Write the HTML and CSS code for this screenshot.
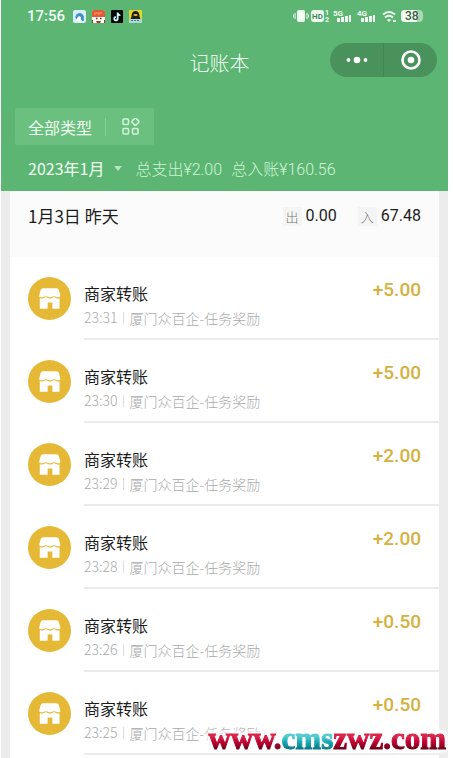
FILE: index.html
```html
<!DOCTYPE html>
<html lang="zh-CN">
<head>
<meta charset="utf-8">
<meta name="viewport" content="width=device-width, initial-scale=1">
<title>记账本</title>
<link rel="stylesheet" href="styles.css">
</head>
<body>
<svg class="defs" aria-hidden="true">
  <symbol id="shop" viewBox="0 0 42 42">
    <circle cx="21" cy="21" r="21" fill="#e5b836"/>
    <path fill="#fff" d="M14.500 11h13.500q1.500 0 2 1.500l1.500 5v1.800q-2 1.200-4 0t-4 0-4 0-4 0-4.500 0v-1.800l1.500-5q.5-1.500 2-1.500z"/>
    <path fill="#fff" d="M11.500 20.500q2 1.200 4 0t4 0 4 0 4 0 3.300.2V31h-7v-6h-4.600v6h-7.700z"/>
  </symbol>
</svg>
<header class="header">
  <div class="status">
    <time class="clock">17:56</time>
    <div class="apps">
      <svg width="13" height="13" viewBox="0 0 13 13"><rect width="13" height="13" rx="2" fill="#d9f0fb"/><path d="M2.500 8.500a4.300 4.300 0 1 1 8.300 0V11H9" fill="#3f8fcb"/><path d="M3 11C4 6 7 5 8 7.500Q7 9 9 11z" fill="#fff"/></svg>
      <svg width="13" height="13" viewBox="0 0 13 13"><rect width="13" height="13" rx="2" fill="#fff"/><path d="M0 2q0-2 2-2h9q2 0 2 2v5H0z" fill="#e05a32"/><path d="M3 2v3M5 2v2M7 2v3M9 2v2" stroke="#ffa070"/><rect x="3" y="7" width="7" height="4" rx="2" fill="#fff"/><path d="M4 8.500h1.500M8 8.500h1.500" stroke="#6b2014" stroke-width="1.500"/><path d="M4 11h5l-1 2H5zM0 10h1v3H0zM12 10h1v3h-1z" fill="#a53a20"/></svg>
      <svg width="12" height="13" viewBox="0 0 12 13"><rect width="12" height="13" rx="1" fill="#050505"/><path d="M6.500 2.500v6a1.700 1.700 0 1 1-1.700-1.700M6.500 3q.5 2 2.700 2" fill="none" stroke="#60e6e4" stroke-width="1.600"/><path d="M6.800 2.700v6A1.700 1.700 0 1 1 5 7.200M6.800 3.300q.5 2 2.600 2" fill="none" stroke="#fff" stroke-width="1.200"/></svg>
      <svg width="13" height="13" viewBox="0 0 13 13"><rect width="13" height="13" rx="1" fill="#e7d62b"/><path d="M0 9h13v4H0z" fill="#a9d9d2"/><path d="M2.500 6.500q0-5.500 4-5.500t4 5.500l1 2.500h-10z" fill="#242018"/><rect x="4.500" y="4" width="4" height="2" rx="1" fill="#d7b13d"/><path d="M2 10.500h9" stroke="#4e7ea0" stroke-width="1.200" stroke-dasharray="2 1"/></svg>
    </div>
    <svg class="signals" width="131" height="16" viewBox="0 0 131 16" fill="#effff2" role="img" aria-label="信号与电量">
      <rect x="4" y="2" width="8" height="12" rx="2"/><path d="M2 5v6M.5 6.500v3M14 5v6M15.500 6.500v3" stroke="#effff2"/>
      <rect x="18" y="2" width="13" height="12" rx="3"/>
      <text x="19" y="11" class="hd">HD</text><text x="32" y="7" class="tiny">1</text><text x="32" y="14" class="tiny">2</text>
      <text x="40" y="8" class="net">5G</text><path d="M44 10h3v4h-3zM48 9h3v5h-3zM52 8h3v6h-3zM56 7h2v7h-2z"/>
      <text x="64" y="8" class="net">4G</text><path d="M68 10h3v4h-3zM72 9h3v5h-3zM76 8h3v6h-3zM80 7h2v7h-2z"/>
      <path d="M90 6.500q6-5 12 0M92 9.500q4-3.500 8 0" fill="none" stroke="#effff2" stroke-width="2"/><path d="M94 12q2-1.800 4 0l-2 2zM100 12h3v2h-3z"/>
      <rect x="108" y="2" width="22" height="12" rx="4" fill="#a8d9b2"/><path d="M112 2h12v12h-12q-4 0-4-4V6q0-4 4-4z"/><text x="112" y="12" class="battery">38</text>
    </svg>
  </div>
  <div class="titlebar">
    <h1>记账本</h1>
    <div class="capsule">
      <button type="button" aria-label="更多"><svg width="24" height="10" viewBox="0 0 24 10" fill="#fff"><circle cx="3.500" cy="5" r="1.900"/><circle cx="12" cy="5" r="3.300"/><circle cx="20.500" cy="5" r="1.900"/></svg></button>
      <button type="button" aria-label="关闭"><svg width="20" height="20" viewBox="0 0 20 20"><circle cx="10" cy="10" r="8.500" fill="none" stroke="#fff" stroke-width="2.600"/><circle cx="10" cy="10" r="3.300" fill="#fff"/></svg></button>
    </div>
  </div>
  <button type="button" class="filter"><span>全部类型</span>
    <svg width="18" height="18" viewBox="0 0 18 18" fill="none" stroke="#d3f5da" stroke-width="1.500"><rect x="1" y="1" width="5.500" height="5.500" rx="1"/><rect x="10.600" y=".9" width="5.600" height="5.600" rx="1.500" transform="rotate(45 13.400 3.700)"/><rect x="1" y="10.500" width="5.500" height="5.500" rx="1"/><rect x="10.500" y="10.500" width="5.500" height="5.500" rx="1"/></svg>
  </button>
  <div class="summary">
    <button type="button" class="month">2023年1月<i class="caret"></i></button>
    <span>总支出¥2.00</span><span>总入账¥160.56</span>
  </div>
</header>
<main class="sheet">
  <section class="card">
    <div class="day">
      <h2>1月3日 昨天</h2>
      <p><span class="tag">出</span>0.00</p>
      <p><span class="tag">入</span>67.48</p>
    </div>
    <ul class="list">
      <li><svg class="shop"><use href="#shop"/></svg><div class="entry"><div><h3>商家转账</h3><p class="note"><time>23:31</time><span>厦门众百企-任务奖励</span></p></div><strong>+5.00</strong></div></li>
      <li><svg class="shop"><use href="#shop"/></svg><div class="entry"><div><h3>商家转账</h3><p class="note"><time>23:30</time><span>厦门众百企-任务奖励</span></p></div><strong>+5.00</strong></div></li>
      <li><svg class="shop"><use href="#shop"/></svg><div class="entry"><div><h3>商家转账</h3><p class="note"><time>23:29</time><span>厦门众百企-任务奖励</span></p></div><strong>+2.00</strong></div></li>
      <li><svg class="shop"><use href="#shop"/></svg><div class="entry"><div><h3>商家转账</h3><p class="note"><time>23:28</time><span>厦门众百企-任务奖励</span></p></div><strong>+2.00</strong></div></li>
      <li><svg class="shop"><use href="#shop"/></svg><div class="entry"><div><h3>商家转账</h3><p class="note"><time>23:26</time><span>厦门众百企-任务奖励</span></p></div><strong>+0.50</strong></div></li>
      <li><svg class="shop"><use href="#shop"/></svg><div class="entry"><div><h3>商家转账</h3><p class="note"><time>23:25</time><span>厦门众百企-任务奖励</span></p></div><strong>+0.50</strong></div></li>
    </ul>
  </section>
</main>
<div class="watermark"><span>www.</span><span class="teal">cms</span><span>zwz.com</span></div>
</body>
</html>
```
FILE: styles.css
```css
* { box-sizing: border-box; margin: 0; padding: 0; }
body {
  display: flex;
  flex-direction: column;
  min-height: 100vh;
  padding: 0 7px 0 1px;
  background: #fff;
  color: #1c1c1c;
  font-family: "Noto Sans CJK SC", sans-serif;
}
button { border: 0; background: none; color: inherit; font: inherit; }
.defs { position: absolute; width: 0; height: 0; }

.header { background: #5cb572; color: #effff2; }
.status { display: flex; align-items: center; height: 32px; padding: 0 24px 0 26px; }
.clock { font: 500 15px/32px Roboto, sans-serif; }
.apps { display: flex; gap: 6px; margin-left: 8px; }
.signals { margin-left: auto; }
.signals text { font-family: Roboto, sans-serif; font-weight: 700; }
.signals .hd { font-size: 8px; fill: #3f8552; }
.signals .tiny { font-size: 7px; }
.signals .net { font-size: 8px; }
.signals .battery { font-size: 12px; font-weight: 500; fill: #3c5c46; }

.titlebar { display: grid; grid-template-columns: 1fr auto 1fr; align-items: center; height: 62px; padding: 0 11px; }
.titlebar h1 { grid-column: 2; font-size: 20px; font-weight: 300; line-height: 28px; margin-right: 10px; }
.capsule { justify-self: end; display: flex; width: 107px; height: 34px; margin-bottom: 6px; border-radius: 17px; background: #4a925b; }
.capsule button { flex: 1; display: flex; align-items: center; justify-content: center; }
.capsule button + button { border-left: 1px solid #438653; }

.filter { display: flex; align-items: center; width: 139px; height: 37px; margin: 14px 0 0 14px; padding: 0 13px; border-radius: 2px; background: #6bc080; font-size: 16px; }
.filter span { padding-right: 13px; border-right: 1px solid #8dd29e; line-height: 18px; }
.filter svg { margin-left: 16px; }
.summary { display: flex; align-items: center; gap: 9px; height: 46px; padding: 0 27px; font-size: 16px; font-weight: 300; white-space: nowrap; }
.summary span { color: #d0f5d8; font-family: Roboto, "Noto Sans CJK SC", sans-serif; }
.month { display: flex; align-items: center; font-weight: 400; }
.caret { margin: 0 4px 0 10px; border: 4px solid transparent; border-top: 5px solid #b4e6bf; border-bottom: 0; }

.sheet { flex: 1; display: flex; padding: 0 9px; background: #ececec; }
.card { flex: 1; background: #fff; }
.day { display: flex; gap: 21px; height: 66px; padding: 10px 18px 0; background: #fbfbfb; }
.day h2 { flex: 1; font-size: 17px; font-weight: 400; line-height: 30px; }
.day p { display: flex; align-items: center; gap: 4px; height: 30px; font: 400 16px/20px Roboto, sans-serif; }
.tag { width: 19px; background: #f4f4f4; color: #777; font: 300 13px/19px "Noto Sans CJK SC", sans-serif; text-align: center; }

.list { list-style: none; }
.list li { display: flex; height: 83px; padding-left: 18px; }
.shop { flex: none; width: 43px; height: 43px; margin: 20px 13px 0 0; }
.entry { flex: 1; display: flex; justify-content: space-between; padding: 23px 18px 0 0; border-bottom: 2px solid #ebebeb; }
.entry h3 { font-size: 16px; font-weight: 400; line-height: 26px; }
.note { display: flex; align-items: center; color: #aaa; font-size: 14px; font-weight: 300; line-height: 23px; }
.note span { margin-left: 6px; padding-left: 5px; border-left: 1px solid #ddd; line-height: 12px; }
.entry strong { color: #d5b13f; font: 500 19px/20px Roboto, sans-serif; }

.watermark {
  position: fixed;
  right: 9px;
  bottom: 2px;
  color: #bd0b35;
  font: 700 31px/34px "Liberation Serif", serif;
  filter: drop-shadow(0 0 2px #fff) drop-shadow(0 0 2px #fff) drop-shadow(0 0 1px #fff);
}
.watermark span { background: linear-gradient(#d8254a 45%, #c00032 60%, #6d0018 80%); background-clip: text; -webkit-background-clip: text; color: transparent; -webkit-text-stroke: 1px transparent; }
.watermark .teal { background-image: linear-gradient(#51cbd0 45%, #19a9b7 60%, #087783 80%); }
```
